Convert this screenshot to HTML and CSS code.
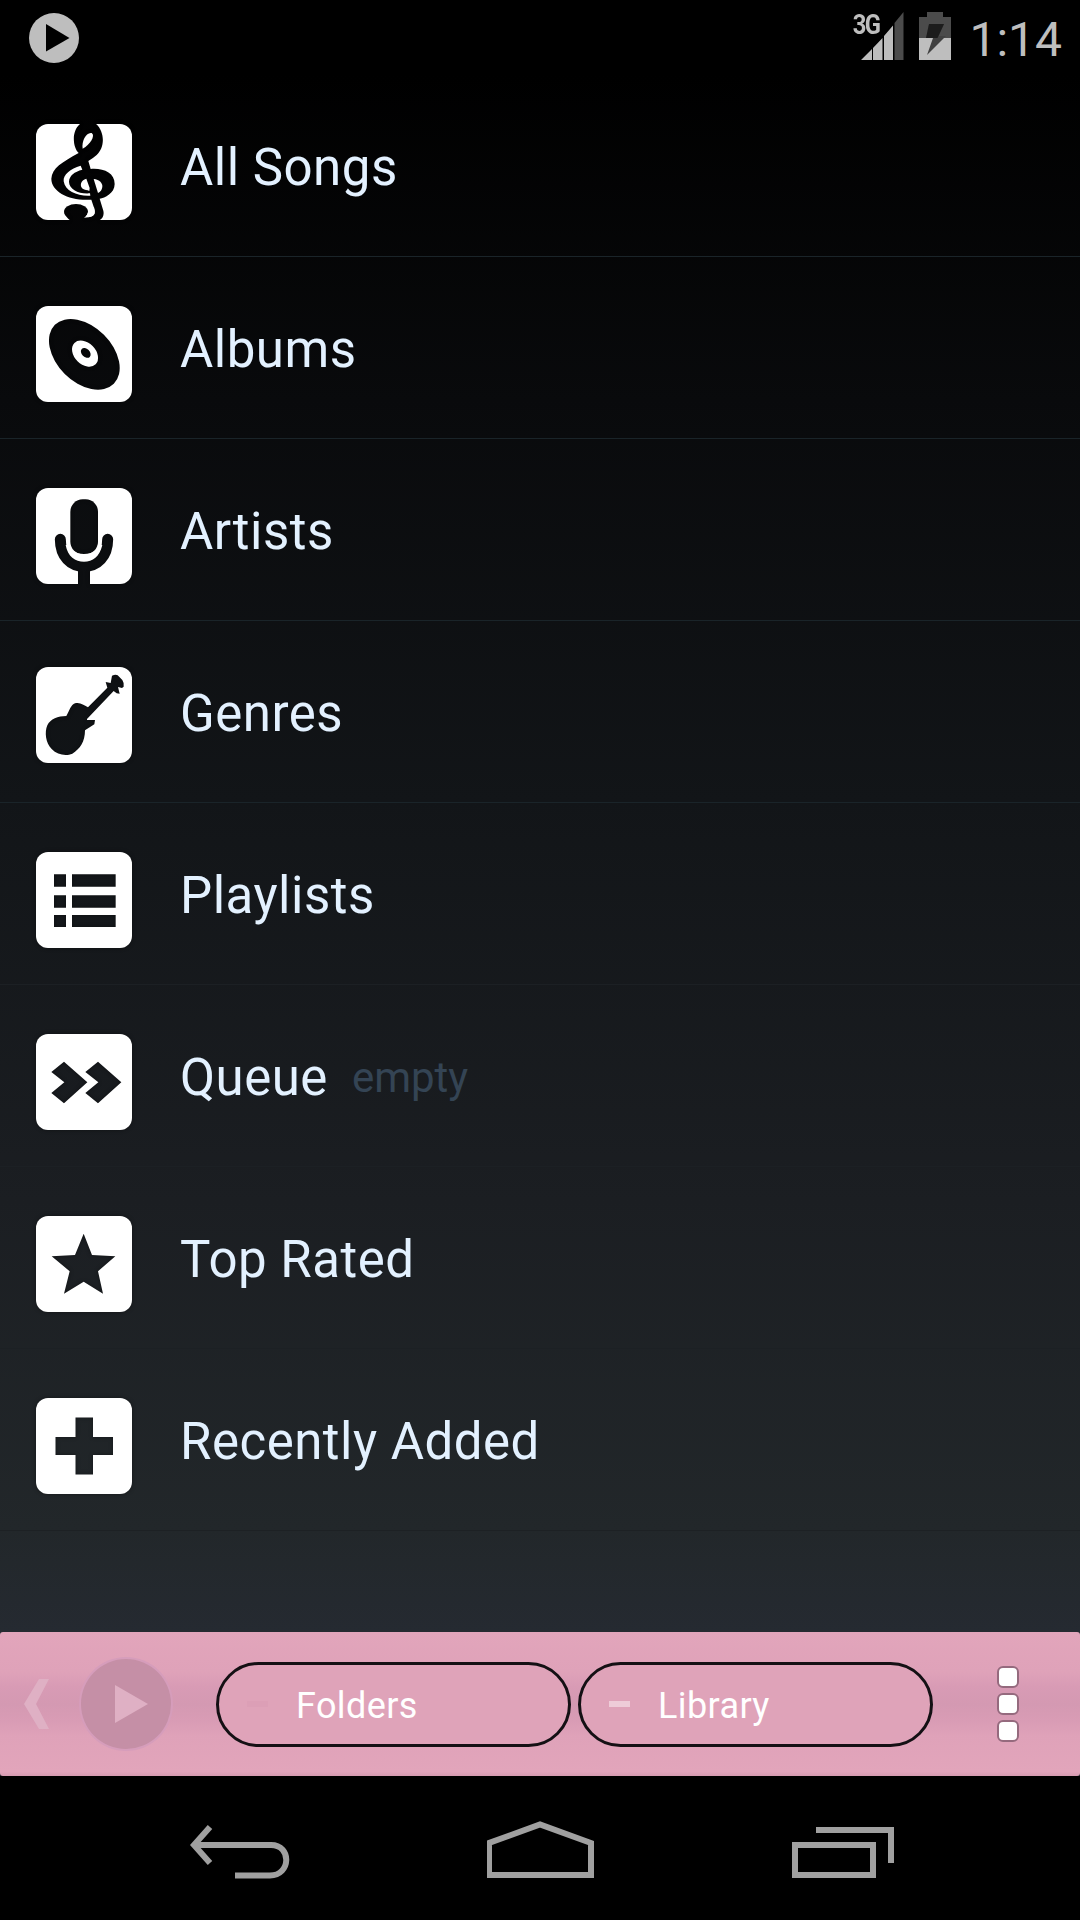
FILE: index.html
```
<!DOCTYPE html>
<html lang="en">
<head>
    <meta charset="UTF-8">
    <meta name="viewport" content="width=device-width, initial-scale=1.0">
    <link rel="stylesheet" href="styles.css">
    <title>Music Library</title>
</head>
<body>
    <header class="status-bar">
        <svg class="status-play" width="50" height="50" viewBox="0 0 50 50">
            <circle cx="25" cy="25" r="25" fill="#bebebe"/>
            <path d="M17 11L40.500 25L17 38.500Z" fill="#000"/>
        </svg>
        <span class="network">3G</span>
        <svg class="signal" width="43" height="49" viewBox="0 0 43 49">
            <path d="M0 49L11 38V49ZM12 37L21.500 27V49H12ZM23 25L32 14.500V49H23Z" fill="#bebebe"/>
            <path d="M33.500 12L42.500 1V49H33.500Z" fill="#4b4b4b"/>
        </svg>
        <svg class="battery" width="32" height="48" viewBox="0 0 32 48">
            <path d="M8 0H24V5H32V48H0V5H8Z" fill="#4b4b4b"/>
            <path d="M0 26H32V48H0Z" fill="#bebebe"/>
            <path d="M10 12H25L19.500 24H27L8 43L14 26H7Z" fill="#404040"/>
            <path d="M10 12H25L19.500 24L18.500 26H7Z" fill="#1c1c1c"/>
        </svg>
        <span class="clock">1:14</span>
    </header>

    <ul class="library">
        <li>
            <svg class="icon" viewBox="48 42 288 288">
                <mask id="clef">
                    <rect x="48" y="42" width="288" height="288" fill="#fff"/>
                    <path d="M176 129C158 112 154 63 180 42L190 36H220C254 56 258 110 230 135Q220 144 205 153L212 177C250 174 284 188 284 222C284 250 254 264 239 266L250 302C253 317 248 326 236 332H192V323C214 323 228 316 224 299L214 269C150 274 94 246 94 206C96 174 126 157 176 129Z" fill="#000"/>
                    <path d="M188 116C184 94 198 66 215 69C227 76 211 104 188 116Z" fill="#fff"/>
                    <path d="M182 167C151 177 129 193 131 214C135 244 173 259 211 257L210 250C177 253 147 238 147 215C148 197 163 185 187 179Z" fill="#fff"/>
                    <path d="M199 206C182 211 178 227 188 236C194 241 202 238 208 243L209 234Z" fill="#fff"/>
                    <path d="M221 207C239 209 248 219 247 231C246 240 241 246 234 249Z" fill="#fff"/>
                    <ellipse cx="168" cy="305" rx="36" ry="23" fill="#000"/>
                    <path d="M134 310C140 325 150 332 160 336H206V318H180Z" fill="#000"/>
                    <path d="M203 308C202 316 197 319 192 323C211 323 222 319 224 310L222 290Z" fill="#fff"/>
                </mask>
                <rect x="48" y="42" width="288" height="288" rx="36" fill="#fff" mask="url(#clef)"/>
            </svg>
            <span class="title">All Songs</span>
        </li>
        <li>
            <svg class="icon" viewBox="48 48 288 288">
                <mask id="disc">
                    <rect x="48" y="48" width="288" height="288" fill="#fff"/>
                    <g transform="rotate(45 193 193)">
                        <ellipse cx="193" cy="193" rx="125" ry="83" fill="#000"/>
                        <ellipse cx="193" cy="190" rx="45" ry="32" fill="#fff"/>
                        <ellipse cx="193" cy="187" rx="17" ry="12" fill="#000"/>
                    </g>
                </mask>
                <rect x="48" y="48" width="288" height="288" rx="36" fill="#fff" mask="url(#disc)"/>
            </svg>
            <span class="title">Albums</span>
        </li>
        <li>
            <svg class="icon" viewBox="48 594 288 288">
                <mask id="mic">
                    <rect x="48" y="594" width="288" height="288" fill="#fff"/>
                    <rect x="151" y="628" width="83" height="164" rx="37" fill="#000"/>
                    <path d="M121 748C121 800 152 829 192 829S263 800 263 748" fill="none" stroke="#000" stroke-width="33" stroke-linecap="round"/>
                    <path d="M174 835H210V882H174Z" fill="#000"/>
                    <path d="M137 765C143 800 166 815 192 815S239 800 247 765L234 763C232 783 219 792 192 792S153 783 150 763Z" fill="#fff"/>
                </mask>
                <rect x="48" y="594" width="288" height="288" rx="36" fill="#fff" mask="url(#mic)"/>
            </svg>
            <span class="title">Artists</span>
        </li>
        <li>
            <svg class="icon icon-guitar" viewBox="48 51 288 288">
                <mask id="guitar">
                    <rect x="48" y="51" width="288" height="288" fill="#fff"/>
                    <path d="M276 77Q287 72 293 76L307 90Q313 99 311 110L306 114L294 111L299 131L290 130L281 123L201 207V210H225L223 223L195 241C195 275 180 297 157 311C138 319 112 315 95 297C77 280 73 246 82 226C91 207 114 198 139 198C148 183 153 163 165 160C181 156 190 165 204 172L262 113L257 96L272 99Z" fill="#000"/>
                </mask>
                <rect x="48" y="51" width="288" height="288" rx="36" fill="#fff" mask="url(#guitar)"/>
            </svg>
            <span class="title">Genres</span>
        </li>
        <li>
            <svg class="icon" viewBox="48 606 288 288">
                <mask id="list">
                    <rect x="48" y="606" width="288" height="288" fill="#fff"/>
                    <path d="M102 673H138V710H102ZM156 673H287V710H156ZM102 736H138V773H102ZM156 736H287V773H156ZM102 795H138V831H102ZM156 795H287V831H156Z" fill="#000"/>
                </mask>
                <rect x="48" y="606" width="288" height="288" rx="36" fill="#fff" mask="url(#list)"/>
            </svg>
            <span class="title">Playlists</span>
        </li>
        <li>
            <svg class="icon" viewBox="48 72 288 288">
                <mask id="queue">
                    <rect x="48" y="72" width="288" height="288" fill="#fff"/>
                    <path d="M94 186L132 155L202 217L132 280L94 249L133 217ZM196 186L234 155L304 217L234 280L196 249L235 217Z" fill="#000"/>
                </mask>
                <rect x="48" y="72" width="288" height="288" rx="36" fill="#fff" mask="url(#queue)"/>
            </svg>
            <span class="title">Queue</span>
            <span class="note">empty</span>
        </li>
        <li>
            <svg class="icon" viewBox="48 618 288 288">
                <mask id="star">
                    <rect x="48" y="618" width="288" height="288" fill="#fff"/>
                    <path d="M191 671L216 735L286 739L234 784L249 851L191 815L132 851L149 784L95 739L165 735Z" fill="#000"/>
                </mask>
                <rect x="48" y="618" width="288" height="288" rx="36" fill="#fff" mask="url(#star)"/>
            </svg>
            <span class="title">Top Rated</span>
        </li>
        <li>
            <svg class="icon" viewBox="0 0 96 96">
                <mask id="plus">
                    <rect width="96" height="96" fill="#fff"/>
                    <path d="M39.500 19.500H57V39H77V57H57V76.500H39.500V57H19.500V39H39.500Z" fill="#000"/>
                </mask>
                <rect width="96" height="96" rx="12" fill="#fff" mask="url(#plus)"/>
            </svg>
            <span class="title">Recently Added</span>
        </li>
    </ul>

    <div class="player-bar">
        <svg class="prev" width="25" height="50" viewBox="0 0 25 50">
            <path d="M15 0H25L12 25L25 50H15L0 25Z" fill="#dfb0c4"/>
        </svg>
        <div class="play">
            <svg width="33" height="38" viewBox="0 0 33 38"><path d="M0 0L33 19L0 38Z" fill="#dfb0c4"/></svg>
        </div>
        <button class="tab"><i class="dash"></i><span>Folders</span></button>
        <button class="tab active"><i class="dash"></i><span>Library</span></button>
        <div class="menu">
            <i></i><i></i><i></i>
        </div>
    </div>

    <nav class="nav-bar">
        <svg width="100" height="60" viewBox="190 1820 100 60">
            <path d="M210 1827L194 1845L210 1863" fill="none" stroke="#a0a0a0" stroke-width="6"/>
            <path d="M194 1845H271C292 1845 291 1875.500 270 1875.500H235" fill="none" stroke="#a0a0a0" stroke-width="6"/>
        </svg>
        <svg width="108" height="60" viewBox="487 1820 108 60">
            <path d="M489 1875H591V1843L540 1824.500L489 1843Z" fill="none" stroke="#a0a0a0" stroke-width="6"/>
        </svg>
        <svg width="102" height="60" viewBox="792 1820 102 60">
            <path d="M795 1845H873V1875H795ZM816 1830H891V1863" fill="none" stroke="#a0a0a0" stroke-width="6"/>
        </svg>
    </nav>
</body>
</html>
```
FILE: styles.css
```
* {
    box-sizing: border-box;
}

body {
    font-family: Roboto, "Noto Sans", sans-serif;
    background: linear-gradient(#000 75px, #090a0c 400px, #121518 800px, #1b1e22 1200px, #22272a 1530px, #252a31 1632px);
    margin: 0;
    height: 1920px;
    display: flex;
    flex-direction: column;
    overflow: hidden;
}

.status-bar {
    height: 75px;
    display: flex;
    align-items: flex-start;
    background: #000;
    color: #bebebe;
    padding: 0 18px 0 29px;
}

.status-play {
    margin-top: 13px;
}

.network {
    margin-left: auto;
    margin-right: -18px;
    margin-top: 10px;
    font-size: 28px;
    line-height: 30px;
    font-weight: 700;
    letter-spacing: -2px;
    transform: scaleX(0.85);
    transform-origin: right;
}

.signal {
    margin-top: 11px;
    margin-right: 15px;
}

.battery {
    margin-top: 12px;
}

.clock {
    margin-left: 18px;
    margin-top: 12px;
    font-size: 48px;
    line-height: 56px;
}

.library {
    list-style: none;
    margin: 0;
    padding: 0;
    flex-grow: 1;
}

.library li {
    height: 182px;
    display: flex;
    align-items: flex-start;
    padding-left: 36px;
    border-bottom: 1px solid #1a2429;
}

.library li:nth-child(n+5) {
    border-bottom-color: #1c2024;
}

.library li:last-child {
    border-bottom-color: #1d2124;
}

.icon {
    width: 96px;
    height: 96px;
    margin-top: 49px;
    filter: drop-shadow(0 0 2px rgba(0, 0, 0, 0.4));
}

.icon-guitar {
    margin-top: 46px;
}

.title {
    margin-left: 48px;
    margin-top: 63px;
    font-size: 51px;
    line-height: 60px;
    letter-spacing: 0.5px;
    color: #e3f1ff;
}

.note {
    margin-left: 24px;
    margin-top: 63px;
    font-size: 42px;
    line-height: 60px;
    color: #344454;
}

.player-bar {
    height: 144px;
    display: flex;
    align-items: center;
    padding-left: 24px;
    border-radius: 3px;
    background: linear-gradient(#e2a5bb, #dfa2b9 28%, #d89bb5 38%, #d499b2 50%, #d99cb5 62%, #dfa2b9 72%, #e2a5bb 97%, #d79bb1);
}

.play {
    width: 90px;
    height: 90px;
    margin: 0 45px 0 32px;
    border-radius: 50%;
    background: #c58fa6;
    box-shadow: 0 0 0 2px #d69dbb;
    display: flex;
    align-items: center;
    padding-left: 34px;
}

.tab {
    width: 355px;
    height: 85px;
    margin-right: 7px;
    padding: 0 0 0 28px;
    border: 3px solid #141014;
    border-radius: 43px;
    background: #dfa3b9;
    color: #fff;
    font-family: inherit;
    font-size: 36px;
    letter-spacing: 0.4px;
    display: flex;
    align-items: center;
}

.tab span {
    padding-top: 3px;
}

.dash {
    width: 21px;
    height: 6px;
    margin-right: 28px;
    background: #dc9fb6;
}

.active .dash {
    background: #eeccd8;
}

.menu {
    margin-left: 57px;
    display: flex;
    flex-direction: column;
    gap: 5px;
}

.menu i {
    width: 22px;
    height: 22px;
    border: 2px solid #956a7e;
    border-radius: 6px;
    background: #fff;
}

.nav-bar {
    height: 144px;
    background: #000;
    display: flex;
    justify-content: space-between;
    padding: 44px 186px 0 190px;
}
```
